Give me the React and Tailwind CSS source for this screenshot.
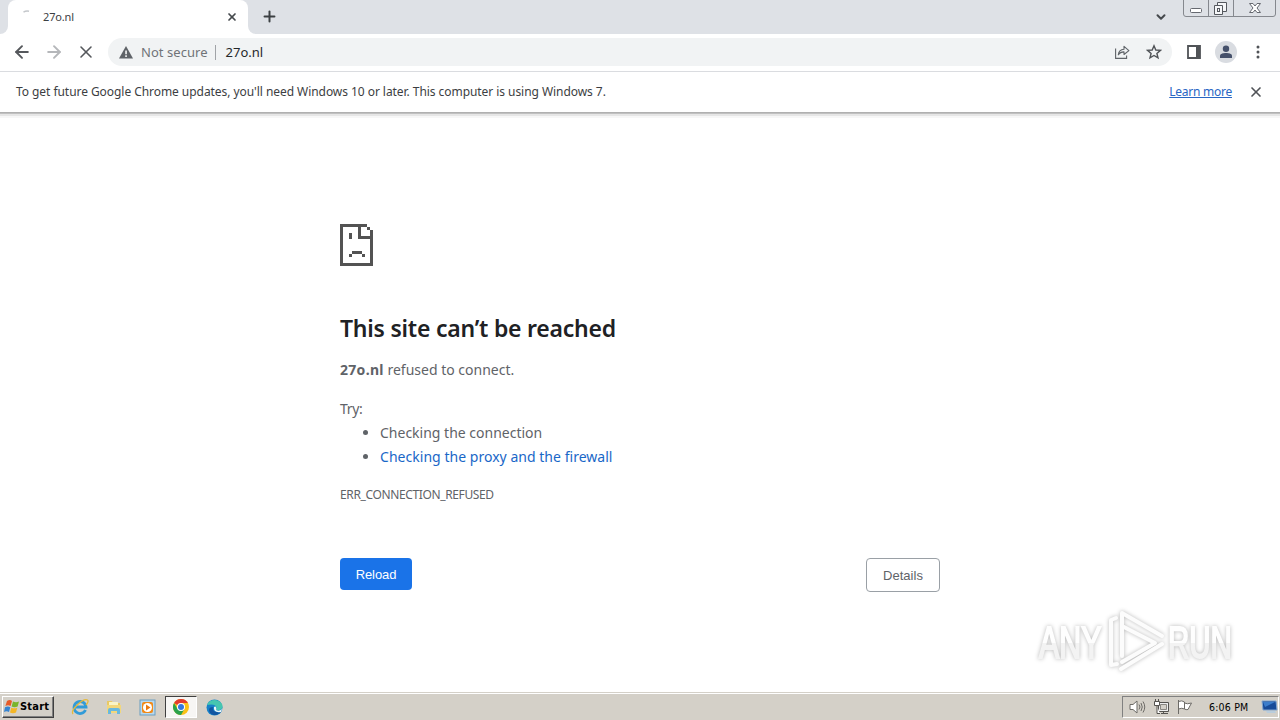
import { X, Plus, ArrowLeft, ArrowRight, ChevronDown } from "lucide-react";

const uiFont = "font-['Noto_Sans','Open_Sans',sans-serif]";

function TabStrip() {
  return (
    <div className="relative flex h-[34px] shrink-0 bg-[#dee1e6]">
      <div className="flex w-2 items-end bg-white">
        <div className="h-full w-2 rounded-br-lg bg-[#dee1e6]" />
      </div>
      <div className="flex h-[34px] w-60 items-center rounded-t-lg bg-white pr-[10px] pl-[11px]">
        <svg width="16" height="16" viewBox="0 0 16 16" fill="none" stroke="#c4c7cb" strokeWidth="1.5">
          <path d="M4.5 3.2A7 7 0 0 1 10 2.3" />
        </svg>
        <span className="ml-2 text-[11px] leading-4 tracking-[-0.15px] text-[#3c4043]">27o.nl</span>
        <X size={12} strokeWidth={3.4} className="ml-auto text-[#45494d]" />
      </div>
      <div className="flex w-2 bg-white">
        <div className="h-full w-2 rounded-bl-lg bg-[#dee1e6]" />
      </div>
      <Plus size={17} strokeWidth={2.8} className="mt-[8px] ml-[5px] text-[#3c4043]" />
      <ChevronDown size={14} strokeWidth={3.4} className="mt-[10px] ml-auto text-[#45494d]" />
      <svg width="94" height="18" viewBox="0 0 94 18" fill="none" className="mr-[3px] ml-[15px]">
        <path d="M.5 0V14Q.5 16.5 3 16.5H90Q92.5 16.5 92.5 14V0M25.5 0V16M50.5 0V16" stroke="#85888e" />
        <rect x="7.500" y="8.500" width="11" height="4" rx="1" fill="#fff" stroke="#666970" />
        <path d="M34.500 2.500H43.500V11.500H34.500Z" fill="#f5f6f8" stroke="#55585e" />
        <path d="M31.500 5.500H39.500V14.500H31.500Z" fill="#f5f6f8" stroke="#55585e" />
        <rect x="34.500" y="8.500" width="2" height="3" stroke="#55585e" />
        <path d="M66.500 3.500H70L72 6L74 3.500H77.500L74 8L77.500 12.500H74L72 10L70 12.500H66.500L70 8Z" fill="#fff" stroke="#666970" />
      </svg>
    </div>
  );
}

function Toolbar() {
  return (
    <div className="flex h-[38px] shrink-0 items-center border-b border-[#dadce0] bg-white pr-[14px] pb-px pl-3">
      <ArrowLeft size={20} strokeWidth={2.3} className="text-[#55585c]" />
      <ArrowRight size={20} strokeWidth={2.3} className="ml-3 text-[#b5b7ba]" />
      <X size={20} strokeWidth={1.9} className="ml-3 text-[#55585c]" />
      <div className="ml-3 flex h-7 w-[1064px] items-center rounded-full bg-[#f1f3f4] pr-[10px] pl-[11px]">
        <svg width="14" height="13" viewBox="0 0 14 13">
          <path d="M7 0L14 12.500H0Z" fill="#5f6368" />
          <path d="M6.300 4.500H7.800V8.300H6.300ZM6.300 9.300H7.800V10.900H6.300Z" fill="#fff" />
        </svg>
        <span className="ml-2 pt-[2px] text-[13px] tracking-[0.05px] text-[#707478]">Not secure</span>
        <div className="ml-[7px] h-[15px] w-px bg-[#a0a3a7]" />
        <span className="ml-[10px] pt-[2px] text-[13px] text-[#25282b]">27o.nl</span>
        <svg width="16" height="16" viewBox="0 0 16 16" fill="none" stroke="#5f6368" strokeWidth="1.1" className="ml-auto">
          <path d="M1.600 4.500V14.400H12.600V11.500" />
          <path d="M4.300 10.800C4.600 7.400 6.400 5.400 10 5.200V2.300L14.900 6.600L10 10.500V7.900C7.500 7.800 5.600 8.900 4.300 10.800Z" strokeLinejoin="round" />
        </svg>
        <svg width="16" height="16" viewBox="0 0 16 16" fill="none" stroke="#505357" strokeWidth="1.400" className="ml-4">
          <path d="M8 1.800L9.800 6L14.400 6.400L10.900 9.400L12 13.900L8 11.500L4 13.900L5.100 9.400L1.600 6.400L6.200 6Z" />
        </svg>
      </div>
      <svg width="14" height="14" viewBox="0 0 14 14" className="ml-[15px]">
        <path d="M1 1H13V13H1Z" fill="none" stroke="#505357" strokeWidth="1.800" />
        <path d="M9 1H13V13H9Z" fill="#505357" />
      </svg>
      <svg width="22" height="22" viewBox="0 0 22 22" className="ml-[14px]">
        <circle cx="11" cy="11" r="11" fill="#d9dce1" />
        <circle cx="11" cy="7.700" r="3.200" fill="#46516b" />
        <path d="M5 17V15C5 12.800 8 12 11 12S17 12.800 17 15V17Z" fill="#46516b" />
      </svg>
      <svg width="4" height="14" viewBox="0 0 4 14" fill="#505357" className="mr-[6px] ml-auto">
        <circle cx="2" cy="2" r="1.500" />
        <circle cx="2" cy="7" r="1.500" />
        <circle cx="2" cy="12" r="1.500" />
      </svg>
    </div>
  );
}

function InfoBar() {
  return (
    <>
      <div className="flex h-10 shrink-0 items-center bg-white pr-4 pl-4 text-[12px] text-[#3c3e42]">
        <span className="tracking-[-0.055px]">
          To get future Google Chrome updates, you'll need Windows 10 or later. This computer is using Windows 7.
        </span>
        <a className="ml-auto tracking-[-0.25px] text-[#2866c4] underline">Learn more</a>
        <X size={16} strokeWidth={2.500} className="ml-4 text-[#505357]" />
      </div>
      <div className="h-px shrink-0 bg-[#b0b0b0]" />
      <div className="h-px shrink-0 bg-[#c0c0c0]" />
      <div className="h-[2px] shrink-0 bg-[#e6e6e6]" />
      <div className="h-[2px] shrink-0 bg-[#f7f7f7]" />
    </>
  );
}

function Watermark() {
  return (
    <svg width="204" height="68" viewBox="0 0 204 68" className="absolute top-[488px] left-[1035px] overflow-visible drop-shadow-[0_0_2px_rgba(0,0,0,0.28)]">
      <defs>
        <linearGradient id="letters" x1="0" y1="0" x2="0" y2="1">
          <stop offset="0.5" stopColor="#fefefe" />
          <stop offset="0.5" stopColor="#f3f3f3" />
        </linearGradient>
      </defs>
      <g fill="url(#letters)" stroke="url(#letters)" strokeWidth="2" fontFamily="Liberation Sans, sans-serif" fontSize="44">
        <text transform="translate(4 52) scale(.69 1)">ANY</text>
        <text transform="translate(133 52) scale(.67 1)">RUN</text>
      </g>
      <g fill="none" stroke="#fcfcfc" strokeWidth="4" strokeLinecap="round" strokeLinejoin="round">
        <path d="M87 50V7L127 30" />
        <path d="M87 20L120 37L87 56" />
        <path d="M81 12L76 14V59L82 58" />
        <path d="M86 63L127 38" />
      </g>
    </svg>
  );
}

function ErrorPage() {
  return (
    <main className="relative h-[574px] shrink-0 bg-white font-['Noto_Sans','Open_Sans',sans-serif] text-[#5f6368]">
      <div className="mx-auto w-[600px] pt-[106px]">
        <svg width="33" height="42" viewBox="0 0 33 42" fill="#535353" shapeRendering="crispEdges">
          <path d="M0 0H27V3H30V6H33V42H0ZM3 3V39H30V15H18V3ZM21 3V12H30V6H27V3Z" fillRule="evenodd" />
          <path d="M9 9H12V15H9ZM12 27H22V30H12ZM9 30H12V33H9ZM22 30H25V33H22Z" />
        </svg>
        <h1 className="mt-[48px] text-[23px] leading-[29px] font-semibold tracking-[-0.23px] whitespace-nowrap text-[#202124]">This site can’t be reached</h1>
        <p className="mt-[15px] text-[14px] leading-6">
          <strong className="tracking-[0.3px]">27o.nl</strong> refused to connect.
        </p>
        <p className="mt-[15px] text-[14px] leading-6 tracking-[-0.3px]">Try:</p>
        <ul className="list-disc pl-10 text-[14px] leading-6">
          <li>Checking the connection</li>
          <li><a className="tracking-[0.03px] text-[#1967c8]">Checking the proxy and the firewall</a></li>
        </ul>
        <p className="mt-[17px] text-[12px] leading-[18px] tracking-[-0.37px]">ERR_CONNECTION_REFUSED</p>
        <div className="mt-[54px] flex items-start justify-between font-['Liberation_Sans',sans-serif] text-[13px]">
          <button className="h-8 w-[72px] rounded bg-[#1a73e8] pt-[2px] tracking-[-0.1px] text-white">Reload</button>
          <button className="h-[34px] w-[74px] rounded border border-[#9aa0a6] pt-[2px] tracking-[0.05px]">Details</button>
        </div>
      </div>
      <Watermark />
    </main>
  );
}

function Taskbar() {
  return (
    <footer className="flex h-7 shrink-0 items-end border-t border-[#d4d0c8] bg-[#d4d0c8] font-['DejaVu_Sans_Condensed','DejaVu_Sans',sans-serif] text-[11px] text-black shadow-[inset_0_1px_0_#fff]">
      <div className="mb-[2px] ml-[2px] flex h-[22px] w-[52px] items-center border border-t-white border-r-[#404040] border-b-[#404040] border-l-white pl-px shadow-[inset_-1px_-1px_0_#808080]">
        <svg width="16" height="16" viewBox="0 0 16 16" className="shrink-0">
          <path d="M3 2Q6 0 8 2L6.600 7Q4 5.500 1.400 7Z" fill="#e75b28" />
          <path d="M9 2.500Q12 4 15 2.500L13.600 7.500Q10.500 9 7.600 7.500Z" fill="#79b52c" />
          <path d="M1 8.200Q4 6.800 6.300 8.200L5 13Q2.500 11.700 0 13Z" fill="#3684d1" />
          <path d="M7.300 8.700Q10.500 10 13.300 8.700L12 13.500Q9 15 6 13.500Z" fill="#f4b625" />
        </svg>
        <span className="pt-px text-[11px] font-bold tracking-[0.2px]">Start</span>
      </div>
      <svg width="18" height="18" viewBox="0 0 18 18" fill="none" className="mb-1 ml-[17px]">
        <path d="M14.500 12A6 6 0 1 1 15 9H4" stroke="#319bd8" strokeWidth="2.800" />
        <path d="M2 16C-1 12 12 0 16.500 2C18 3 16 6 15 7" stroke="#e5b93a" strokeWidth="1.300" />
      </svg>
      <svg width="18" height="18" viewBox="0 0 18 18" className="mb-1 ml-4">
        <path d="M2 3H7L8 5H15V14H2Z" fill="#e9c965" />
        <path d="M4 4H13V9H4Z" fill="#f9f4c6" />
        <path d="M2 7H16V15H2Z" fill="#f2d77c" />
        <path d="M3 16V12Q3 10 5 10H13Q15 10 15 12V16H12V13H6V16Z" fill="#68b8df" />
      </svg>
      <svg width="17" height="17" viewBox="0 0 17 17" className="mb-1 ml-4">
        <rect x="1" y="1" width="15" height="15" fill="#b8d9ef" stroke="#6b9dbf" />
        <rect x="3" y="3" width="11" height="11" rx="2" fill="#f18a18" />
        <circle cx="8.500" cy="8.500" r="4.500" fill="#fff" />
        <path d="M7 5.500L11.500 8.500L7 11.500Z" fill="#ec7a10" />
      </svg>
      <div className="mb-[2px] ml-[9px] flex h-[22px] w-8 items-center justify-center border border-t-[#404040] border-r-white border-b-white border-l-[#404040] bg-[#f7f6f4]">
        <svg width="16" height="16" viewBox="0 0 16 16">
          <circle cx="8" cy="8" r="8" fill="#fbc116" />
          <path d="M8 8L1.070 4A8 8 0 0 1 14.930 4H8Z" fill="#e33b2e" />
          <path d="M1.070 4A8 8 0 0 0 8 16L11.460 10L4.540 10Z" fill="#2ba24c" />
          <circle cx="8" cy="8" r="4" fill="#fff" />
          <circle cx="8" cy="8" r="3" fill="#3477df" />
        </svg>
      </div>
      <svg width="17" height="17" viewBox="0 0 17 17" className="mb-[4px] ml-[9px]">
        <circle cx="8.500" cy="8.500" r="8" fill="#1681c8" />
        <path d="M1 6C3 0 12-1 16 5C18 10 14 12 10 11C12 8 9 4 1 6Z" fill="#46c6b0" />
        <path d="M7 8C6 12 10 14 15 13C9 19 3 15 3 11Q3 8 7 8Z" fill="#1255a1" />
        <path d="M8 8C10 6 11 10 10 11Q13 13 16 10L15 13Q7 14 8 8Z" fill="#eef9fb" />
      </svg>
      <div className="mr-px mb-[2px] ml-auto flex h-[22px] w-[157px] items-center border border-t-[#808080] border-r-white border-b-white border-l-[#808080] pl-[6px]">
        <svg width="17" height="16" viewBox="0 0 17 16" fill="none" stroke="#6d6b67">
          <path d="M1 5.500H4L8 2V14L4 10.500H1Z" fill="#fff" />
          <path d="M10 5.500Q12 8 10 10.500M12 4Q14.500 8 12 12M14 2.500Q17.500 8 14 13.500" />
        </svg>
        <svg width="16" height="16" viewBox="0 0 16 16" fill="none" stroke="#55534f" className="ml-[7px]">
          <path d="M5.500 3.500H15.500V12.500H5.500ZM8 14.500H15M10.500 12.500V15" fill="#eee" />
          <path d="M7.500 5.500H13.500V10.500H7.500Z" fill="#d4d0c8" stroke="#8a8883" />
          <path d="M1.500 2.500H6.500V6.500H1.500ZM2.500 0V3M5.500 0V3M4 7V14.500H7" fill="#fff" />
        </svg>
        <svg width="17" height="16" viewBox="0 0 17 16" fill="#fff" stroke="#6d6b67" className="ml-[7px]">
          <path d="M2.500 1V15M2.500 2.500Q6 1 8.500 3V10Q6 8.500 2.500 10ZM8.500 4Q11 5.500 15.500 4L12 10.500Q10 11 8.500 10" />
        </svg>
        <span className="ml-[16px] w-[42px] pt-px text-[10.500px] whitespace-nowrap tracking-[0.2px]">6:06 PM</span>
        <svg width="17" height="16" viewBox="0 0 17 16" className="ml-auto shrink-0">
          <path d="M1 2H15L16 11H2Z" fill="#174b99" stroke="#80a5d0" />
          <path d="M2 3H14L4 8Z" fill="#3b7dcc" />
          <path d="M5 12H14L15 14H6Z" fill="#b9cddd" />
        </svg>
      </div>
    </footer>
  );
}

export default function App() {
  return (
    <div className={`flex h-[720px] w-[1280px] flex-col overflow-hidden bg-white ${uiFont}`}>
      <TabStrip />
      <Toolbar />
      <InfoBar />
      <ErrorPage />
      <Taskbar />
    </div>
  );
}
